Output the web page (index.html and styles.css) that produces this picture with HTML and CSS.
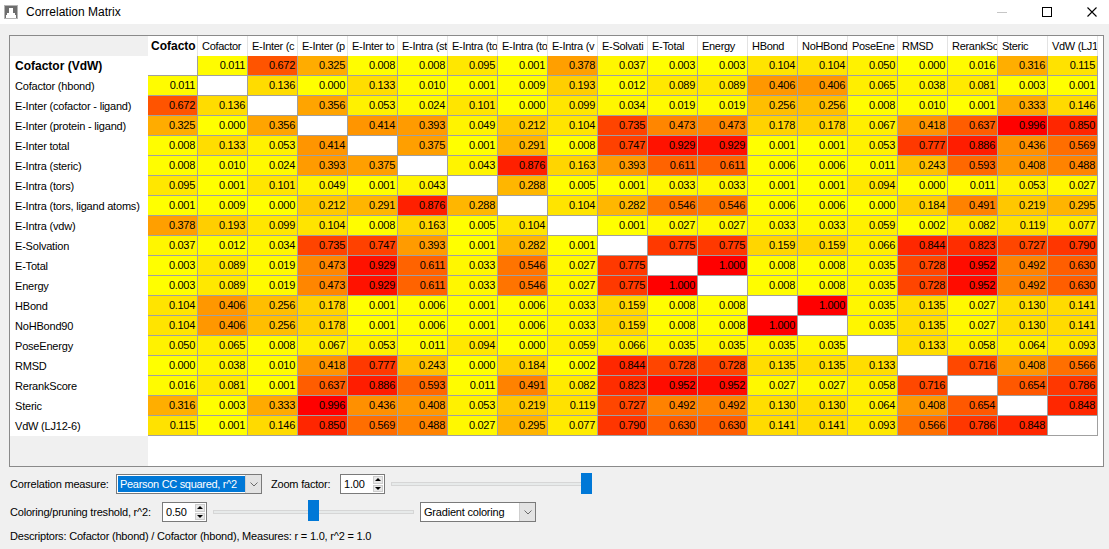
FILE: index.html
```html
<!DOCTYPE html>
<html>
<head>
<meta charset="utf-8">
<title>Correlation Matrix</title>
<link rel="stylesheet" href="styles.css">
</head>
<body>
<div class="titlebar">
  <svg class="appicon" viewBox="0 0 14 14">
    <rect x="0.5" y="0.5" width="13" height="13" fill="#6e6e6e" stroke="#b4b4b4"/>
    <polygon points="2,13 2,10 3,10 3,8 5,8 5,3 9,3 9,8 11,8 11,10 12,10 12,13" fill="#fff"/>
  </svg>
  <span class="title">Correlation Matrix</span>
  <div class="winctl">
    <svg viewBox="0 0 10 10"><line x1="0" y1="5.5" x2="10" y2="5.5" stroke="#c6c6c6" stroke-width="1"/></svg>
    <svg viewBox="0 0 10 10"><rect x="0.5" y="0.5" width="9" height="9" fill="none" stroke="#000" stroke-width="1"/></svg>
    <svg viewBox="0 0 10 10"><path d="M0.5 0.5 L9.5 9.5 M9.5 0.5 L0.5 9.5" stroke="#000" stroke-width="1.1" fill="none"/></svg>
  </div>
</div>

<div class="frame">
  <div class="grid" id="grid"></div>
</div>

<div class="controls">
  <div class="crow row1">
    <span class="lbl lbl-measure">Correlation measure:</span>
    <div class="combo combo-measure sel">
      <span class="combo-text">Pearson CC squared, r^2</span>
      <span class="combo-btn"><svg viewBox="0 0 8 5"><path d="M0.5 0.5 L4 4 L7.5 0.5" fill="none" stroke="#6a6a6a" stroke-width="1"/></svg></span>
    </div>
    <span class="lbl lbl-zoom">Zoom factor:</span>
    <div class="num">
      <span class="num-text">1.00</span>
      <span class="spin"><span class="spin-btn"><i class="up"></i></span><span class="spin-btn"><i class="down"></i></span></span>
    </div>
    <div class="slider slider-zoom">
      <div class="track"></div>
      <div class="thumb thumb-zoom"></div>
    </div>
  </div>

  <div class="crow row2">
    <span class="lbl lbl-thresh">Coloring/pruning treshold, r^2:</span>
    <div class="num">
      <span class="num-text">0.50</span>
      <span class="spin"><span class="spin-btn"><i class="up"></i></span><span class="spin-btn"><i class="down"></i></span></span>
    </div>
    <div class="slider slider-thresh">
      <div class="track"></div>
      <div class="thumb thumb-thresh"></div>
    </div>
    <div class="combo combo-color">
      <span class="combo-text">Gradient coloring</span>
      <span class="combo-btn"><svg viewBox="0 0 8 5"><path d="M0.5 0.5 L4 4 L7.5 0.5" fill="none" stroke="#6a6a6a" stroke-width="1"/></svg></span>
    </div>
  </div>

  <div class="status">Descriptors: Cofactor (hbond) / Cofactor (hbond), Measures: r = 1.0, r^2 = 1.0</div>
</div>

<script src="script.js"></script>
</body>
</html>
```

FILE: styles.css
```css
* { box-sizing: border-box; }
html, body { margin: 0; padding: 0; }
body {
  width: 1109px;
  height: 549px;
  overflow: hidden;
  background: #f0f0f0;
  font-family: "Liberation Sans", Arial, sans-serif;
  font-size: 11px;
  letter-spacing: -0.2px;
  color: #000;
}

/* title bar */
.titlebar {
  height: 24px;
  background: #fff;
  display: flex;
  align-items: center;
}
.appicon { width: 14px; height: 14px; margin-left: 4px; flex: none; }
.title {
  margin-left: 8px;
  font-size: 12px;
  letter-spacing: 0;
  font-family: "Segoe UI", "Liberation Sans", sans-serif;
}
.winctl {
  margin-left: auto;
  display: flex;
  align-items: center;
  gap: 35px;
  padding-right: 12px;
}
.winctl svg { width: 10px; height: 10px; display: block; }

/* matrix frame */
.frame {
  margin: 11px 0 0 9px;
  width: 1095px;
  height: 432px;
  border: 1px solid #8a8a8a;
  background: linear-gradient(to right, #f0f0f0 138px, #fff 138px);
  overflow: hidden;
}
.grid {
  display: grid;
  grid-template-columns: 138px repeat(19, 50px);
  grid-auto-rows: 20px;
}
.corner { background: transparent; }
.colhead {
  background: #fff;
  border-right: 1px solid #e3e3e3;
  padding-left: 4px;
  line-height: 20px;
  letter-spacing: -0.3px;
  white-space: nowrap;
  overflow: hidden;
}
.rowhead {
  background: #fff;
  padding-left: 5px;
  line-height: 20px;
  white-space: nowrap;
  overflow: hidden;
}
.colhead.bold, .rowhead.bold {
  font-weight: bold;
  font-size: 12px;
  letter-spacing: 0;
}
.colhead.bold { padding-left: 3px; }
.cell {
  border-right: 1px solid #a0a0a0;
  border-bottom: 1px solid #a0a0a0;
  text-align: right;
  padding-right: 2px;
  line-height: 19px;
  letter-spacing: -0.3px;
  white-space: nowrap;
  overflow: hidden;
}
.cell.diag { background: #fff; }

/* controls */
.controls { padding-left: 10px; }
.crow { display: flex; align-items: center; height: 20px; }
.row1 { margin-top: 7px; }
.row2 { margin-top: 8px; }
.status { margin-top: 7px; line-height: 14px; }

.lbl { white-space: nowrap; flex: none; }
.lbl-measure { width: 106px; }
.lbl-zoom { width: 69px; margin-left: 9px; }
.lbl-thresh { width: 152px; }

.combo {
  display: flex;
  height: 20px;
  border: 1px solid #7a7a7a;
  background: #fff;
  flex: none;
}
.combo-measure { width: 146px; }
.combo-color { width: 116px; margin-left: 6px; }
.combo-text {
  flex: 1;
  padding-left: 3px;
  line-height: 18px;
  white-space: nowrap;
  overflow: hidden;
}
.combo.sel .combo-text {
  background: #0078d7;
  color: #fff;
  margin: 1px 0 1px 1px;
  padding-left: 2px;
  line-height: 16px;
  letter-spacing: -0.3px;
}
.combo-btn {
  width: 16px;
  flex: none;
  background: #e3e3e3;
  border-left: 1px solid #cfcfcf;
  display: flex;
  align-items: center;
  justify-content: center;
}
.combo-btn svg { width: 8px; height: 5px; display: block; }

.num {
  width: 45px;
  height: 20px;
  flex: none;
  display: flex;
  border: 1px solid #7a7a7a;
  background: #fff;
}
.num-text { flex: 1; padding-left: 3px; line-height: 18px; }
.spin {
  width: 10px;
  display: flex;
  flex-direction: column;
  margin: 1px 1px 1px 0;
  gap: 1px;
}
.spin-btn {
  flex: 1;
  background: #e8e8e8;
  border: 1px solid #cdcdcd;
  display: flex;
  align-items: center;
  justify-content: center;
}
.spin-btn i { display: block; width: 0; height: 0; }
.spin-btn .up {
  border-left: 3px solid transparent;
  border-right: 3px solid transparent;
  border-bottom: 3px solid #000;
}
.spin-btn .down {
  border-left: 3px solid transparent;
  border-right: 3px solid transparent;
  border-top: 3px solid #000;
}

.slider {
  position: relative;
  height: 20px;
  display: flex;
  align-items: center;
  margin-left: 6px;
  flex: none;
}
.slider-zoom { width: 200px; }
.slider-thresh { width: 201px; }
.track {
  width: 100%;
  height: 4px;
  background: #e7eaea;
  border: 1px solid #d6d6d6;
}
.thumb {
  position: absolute;
  top: -1px;
  width: 11px;
  height: 21px;
  background: #0078d7;
}
.thumb-zoom { left: 190px; }
.thumb-thresh { left: 95px; top: -2px; }
```

FILE: script.js
```javascript
(function () {
  var names = [
    "Cofactor (VdW)", "Cofactor (hbond)", "E-Inter (cofactor - ligand)",
    "E-Inter (protein - ligand)", "E-Inter total", "E-Intra (steric)",
    "E-Intra (tors)", "E-Intra (tors, ligand atoms)", "E-Intra (vdw)",
    "E-Solvation", "E-Total", "Energy", "HBond", "NoHBond90", "PoseEnergy",
    "RMSD", "RerankScore", "Steric", "VdW (LJ12-6)"
  ];
  /* column headers as the narrow columns show them */
  var heads = [
    "Cofacto", "Cofactor", "E-Inter (c", "E-Inter (p", "E-Inter to",
    "E-Intra (st", "E-Intra (to", "E-Intra (to", "E-Intra (v", "E-Solvati",
    "E-Total", "Energy", "HBond", "NoHBond", "PoseEne", "RMSD",
    "RerankSc", "Steric", "VdW (LJ1"
  ];
  var rows = [
    "- 0.011 0.672 0.325 0.008 0.008 0.095 0.001 0.378 0.037 0.003 0.003 0.104 0.104 0.050 0.000 0.016 0.316 0.115",
    "0.011 - 0.136 0.000 0.133 0.010 0.001 0.009 0.193 0.012 0.089 0.089 0.406 0.406 0.065 0.038 0.081 0.003 0.001",
    "0.672 0.136 - 0.356 0.053 0.024 0.101 0.000 0.099 0.034 0.019 0.019 0.256 0.256 0.008 0.010 0.001 0.333 0.146",
    "0.325 0.000 0.356 - 0.414 0.393 0.049 0.212 0.104 0.735 0.473 0.473 0.178 0.178 0.067 0.418 0.637 0.996 0.850",
    "0.008 0.133 0.053 0.414 - 0.375 0.001 0.291 0.008 0.747 0.929 0.929 0.001 0.001 0.053 0.777 0.886 0.436 0.569",
    "0.008 0.010 0.024 0.393 0.375 - 0.043 0.876 0.163 0.393 0.611 0.611 0.006 0.006 0.011 0.243 0.593 0.408 0.488",
    "0.095 0.001 0.101 0.049 0.001 0.043 - 0.288 0.005 0.001 0.033 0.033 0.001 0.001 0.094 0.000 0.011 0.053 0.027",
    "0.001 0.009 0.000 0.212 0.291 0.876 0.288 - 0.104 0.282 0.546 0.546 0.006 0.006 0.000 0.184 0.491 0.219 0.295",
    "0.378 0.193 0.099 0.104 0.008 0.163 0.005 0.104 - 0.001 0.027 0.027 0.033 0.033 0.059 0.002 0.082 0.119 0.077",
    "0.037 0.012 0.034 0.735 0.747 0.393 0.001 0.282 0.001 - 0.775 0.775 0.159 0.159 0.066 0.844 0.823 0.727 0.790",
    "0.003 0.089 0.019 0.473 0.929 0.611 0.033 0.546 0.027 0.775 - 1.000 0.008 0.008 0.035 0.728 0.952 0.492 0.630",
    "0.003 0.089 0.019 0.473 0.929 0.611 0.033 0.546 0.027 0.775 1.000 - 0.008 0.008 0.035 0.728 0.952 0.492 0.630",
    "0.104 0.406 0.256 0.178 0.001 0.006 0.001 0.006 0.033 0.159 0.008 0.008 - 1.000 0.035 0.135 0.027 0.130 0.141",
    "0.104 0.406 0.256 0.178 0.001 0.006 0.001 0.006 0.033 0.159 0.008 0.008 1.000 - 0.035 0.135 0.027 0.130 0.141",
    "0.050 0.065 0.008 0.067 0.053 0.011 0.094 0.000 0.059 0.066 0.035 0.035 0.035 0.035 - 0.133 0.058 0.064 0.093",
    "0.000 0.038 0.010 0.418 0.777 0.243 0.000 0.184 0.002 0.844 0.728 0.728 0.135 0.135 0.133 - 0.716 0.408 0.566",
    "0.016 0.081 0.001 0.637 0.886 0.593 0.011 0.491 0.082 0.823 0.952 0.952 0.027 0.027 0.058 0.716 - 0.654 0.786",
    "0.316 0.003 0.333 0.996 0.436 0.408 0.053 0.219 0.119 0.727 0.492 0.492 0.130 0.130 0.064 0.408 0.654 - 0.848",
    "0.115 0.001 0.146 0.850 0.569 0.488 0.027 0.295 0.077 0.790 0.630 0.630 0.141 0.141 0.093 0.566 0.786 0.848 -"
  ];
  var grid = document.getElementById("grid");
  function el(cls, text) {
    var d = document.createElement("div");
    d.className = cls;
    if (text != null) d.textContent = text;
    grid.appendChild(d);
    return d;
  }
  el("corner");
  heads.forEach(function (n, i) {
    var h = el("colhead" + (i === 0 ? " bold" : ""), n);
    h.title = names[i];
  });
  rows.forEach(function (r, i) {
    el("rowhead" + (i === 0 ? " bold" : ""), names[i]);
    r.split(" ").forEach(function (v) {
      if (v === "-") { el("cell diag"); return; }
      var c = el("cell", v);
      var g = Math.round(255 * (1 - parseFloat(v)));
      c.style.background = "rgb(255," + g + ",0)";
    });
  });
})();
```
